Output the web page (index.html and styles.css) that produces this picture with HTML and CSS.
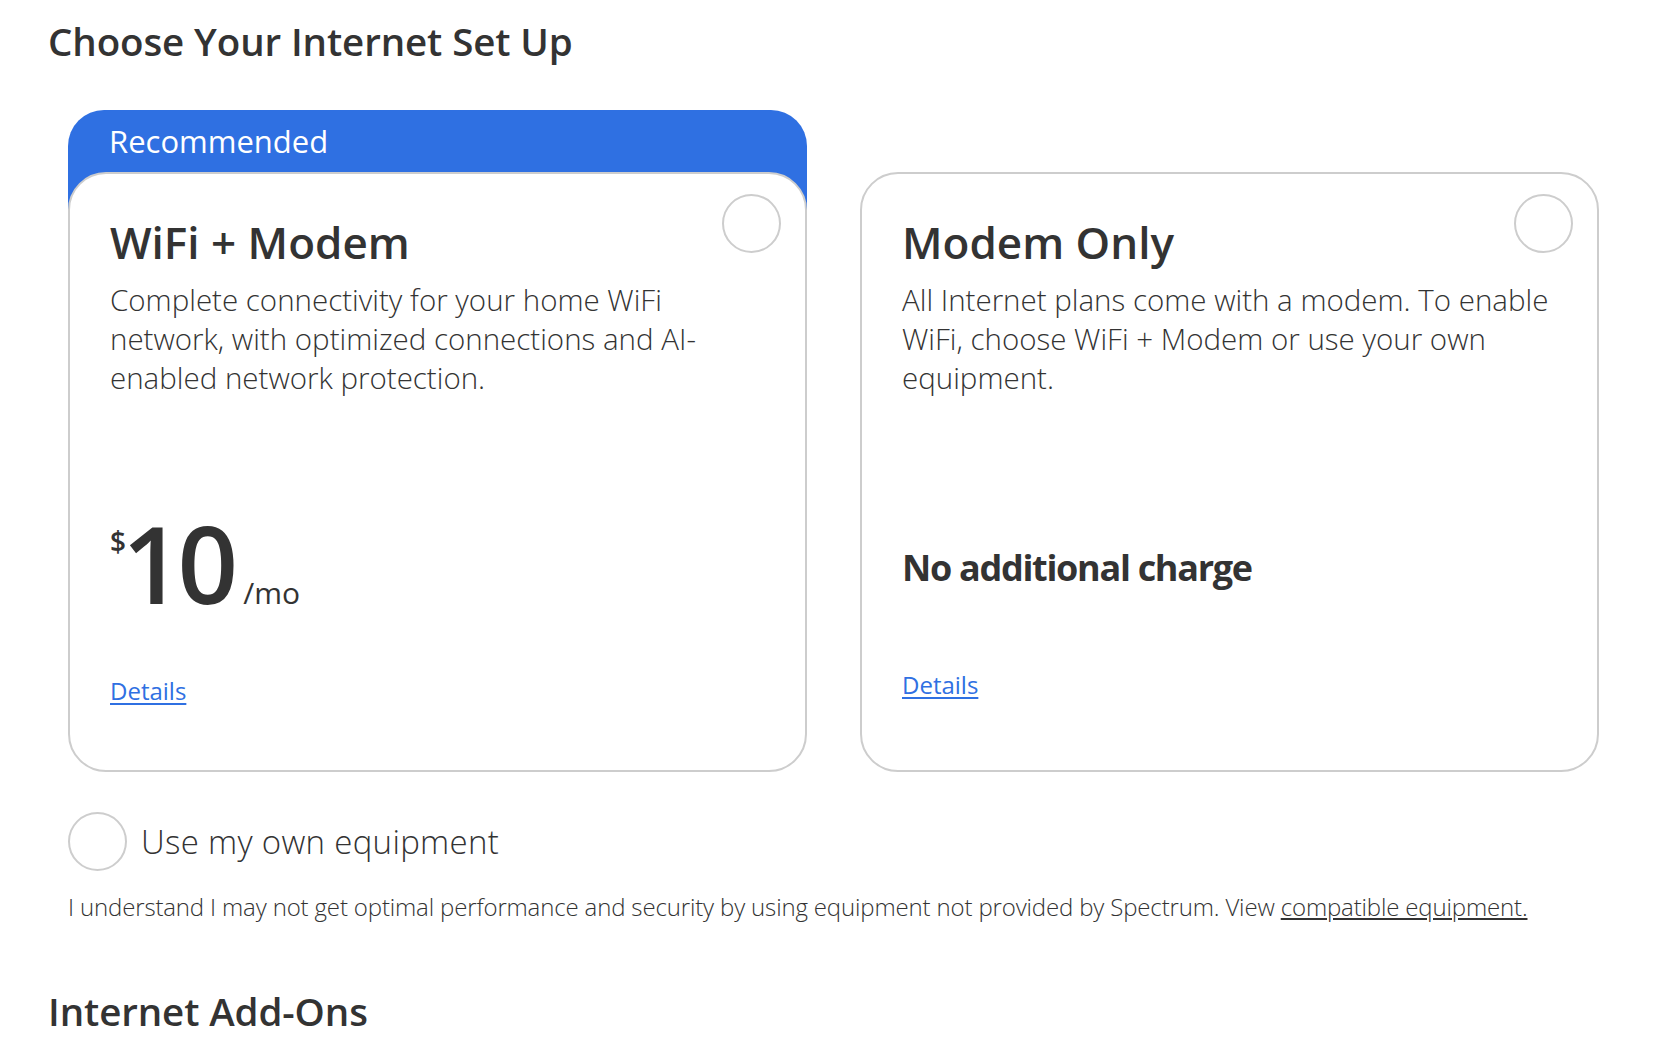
FILE: index.html
```html
<!DOCTYPE html>
<html lang="en">

<head>
  <meta charset="UTF-8">
  <meta name="viewport" content="width=device-width, initial-scale=1.0">
  <title>Choose Your Internet Set Up</title>
  <link rel="stylesheet" href="styles.css">
</head>

<body>
  <main class="page">
    <section class="setup">
      <h2 class="section-title">Choose Your Internet Set Up</h2>

      <div class="plans">
        <div class="plan plan-featured">
          <div class="plan-badge">Recommended</div>
          <div class="plan-card">
            <div class="plan-head">
              <h3 class="plan-name">WiFi + Modem</h3>
              <input type="radio" name="setup" class="radio" aria-label="WiFi + Modem">
            </div>
            <p class="plan-desc">Complete connectivity for your home WiFi network, with optimized connections and AI-enabled network protection.</p>
            <div class="plan-price">
              <span class="price-currency">$</span>
              <span class="price-amount">10</span>
              <span class="price-term">/mo</span>
            </div>
            <a href="#" class="plan-details">Details</a>
          </div>
        </div>

        <div class="plan plan-plain">
          <div class="plan-card">
            <div class="plan-head">
              <h3 class="plan-name">Modem Only</h3>
              <input type="radio" name="setup" class="radio" aria-label="Modem Only">
            </div>
            <p class="plan-desc">All Internet plans come with a modem. To enable WiFi, choose WiFi + Modem or use your own equipment.</p>
            <div class="plan-note">No additional charge</div>
            <a href="#" class="plan-details plan-details-note">Details</a>
          </div>
        </div>
      </div>

      <label class="own-equipment">
        <input type="radio" name="setup" class="radio">
        <span>Use my own equipment</span>
      </label>
      <p class="disclaimer">I understand I may not get optimal performance and security by using equipment not provided by Spectrum. View <a href="#">compatible equipment.</a></p>
    </section>

    <h2 class="section-title section-title-next">Internet Add-Ons</h2>
  </main>
</body>

</html>
```

FILE: styles.css
```css
body {
  margin: 0;
  font-family: "Open Sans", Lato, sans-serif;
  color: #333;
  background: #fff;
}

.page {
  padding: 0 65px 0 48px;
}

.section-title {
  margin: 18px 0 0;
  font-size: 38.5px;
  line-height: 46px;
  font-weight: 600;
  letter-spacing: -0.1px;
}

.section-title-next {
  margin-top: 66px;
}

.setup {
  padding-left: 20px;
}

.setup .section-title {
  margin-left: -20px;
}

.plans {
  display: grid;
  grid-template-columns: 1fr 1fr;
  gap: 53px;
  margin-top: 46px;
}

.plan {
  display: flex;
  flex-direction: column;
}

.plan-plain {
  padding-top: 62px;
}

.plan-featured {
  border-radius: 36px 36px 0 0;
  background: linear-gradient(to bottom, #2f70e2 0, #2f70e2 110px, transparent 110px);
}

.plan-badge {
  height: 62px;
  padding-left: 41px;
  font-size: 31px;
  line-height: 62px;
  font-weight: 400;
  color: #fff;
}

.plan-card {
  flex: 1;
  display: flex;
  flex-direction: column;
  align-items: flex-start;
  padding: 20px 24px 64px 40px;
  border: 2px solid #cdcdcd;
  border-radius: 38px;
  background: #fff;
}

.plan-head {
  display: flex;
  justify-content: space-between;
  align-items: flex-start;
  align-self: stretch;
}

.plan-name {
  margin: 22px 0 0;
  font-size: 44px;
  line-height: 52px;
  font-weight: 600;
}

.radio {
  appearance: none;
  flex: none;
  width: 59px;
  height: 59px;
  margin: 0;
  border: 2px solid #cdcdcd;
  border-radius: 50%;
  background: #fff;
}

.plan-desc {
  margin: 12px 0 0;
  padding-right: 16px;
  font-size: 29.5px;
  line-height: 39px;
  font-weight: 300;
}

.plan-price {
  display: flex;
  align-items: baseline;
  margin-top: 113px;
  line-height: 1;
}

.price-currency {
  align-self: flex-start;
  margin-top: 17px;
  font-size: 28px;
  font-weight: 600;
  letter-spacing: -4px;
}

.price-amount {
  font-size: 106px;
  font-weight: 600;
  letter-spacing: -5px;
}

.price-term {
  margin-left: 10px;
  font-size: 30px;
  font-weight: 400;
}

.plan-details {
  margin-top: 60px;
  font-size: 24px;
  line-height: 30px;
  color: #2f70e2;
  text-decoration-thickness: 2px;
  text-underline-offset: 3px;
}

.plan-note {
  margin-top: 149px;
  font-size: 36px;
  line-height: 44px;
  font-weight: 700;
  letter-spacing: -1.3px;
}

.plan-details-note {
  margin-top: 80px;
}

.own-equipment {
  display: flex;
  align-items: center;
  gap: 14px;
  margin-top: 40px;
  font-size: 33px;
  font-weight: 300;
  letter-spacing: 0.3px;
}

.disclaimer {
  margin: 21px 0 0;
  font-size: 24px;
  line-height: 30px;
  font-weight: 300;
  letter-spacing: -0.15px;
}

.disclaimer a {
  color: #333;
}
```
